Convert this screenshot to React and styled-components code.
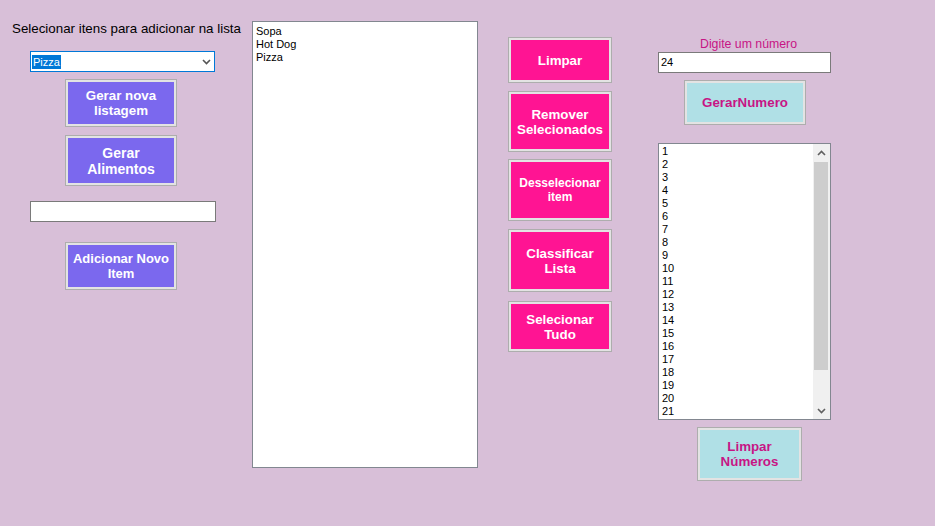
import React from "react";
import styled, { createGlobalStyle } from "styled-components";

const Global = createGlobalStyle`
  html, body { margin: 0; padding: 0; }
  body {
    background: #d8bfd8;
    font-family: "Liberation Sans", Arial, sans-serif;
    -webkit-font-smoothing: antialiased;
  }
`;

const Page = styled.div`
  display: flex;
  align-items: flex-start;
  width: 935px;
  height: 526px;
  background: #d8bfd8;
  overflow: hidden;
`;

const Column = styled.div`
  display: flex;
  flex-direction: column;
  align-items: flex-start;
  flex: 0 0 auto;
  width: ${(p) => p.$w}px;
  padding-top: ${(p) => p.$top || 0}px;
  box-sizing: border-box;
`;

const Label = styled.div`
  margin-left: ${(p) => p.$x || 0}px;
  font-size: ${(p) => p.$size || 13.33}px;
  line-height: ${(p) => p.$lh || 15}px;
  color: ${(p) => p.$color || "#000"};
  white-space: nowrap;
`;

const Button = styled.button`
  display: flex;
  align-items: center;
  justify-content: center;
  box-sizing: border-box;
  margin: ${(p) => p.$mt || 0}px 0 0 ${(p) => p.$x || 0}px;
  width: ${(p) => p.$w}px;
  height: ${(p) => p.$h}px;
  padding: 0 4px;
  border: 1px solid #adadad;
  box-shadow: inset 0 0 0 2px #e3e3e3;
  background: ${(p) => p.$bg};
  color: ${(p) => p.$fg || "#fff"};
  font-family: "Liberation Sans", Arial, sans-serif;
  font-weight: bold;
  font-size: ${(p) => p.$size || 13.33}px;
  line-height: ${(p) => p.$lh || 15}px;
  text-align: center;
  cursor: default;
`;

const TextBox = styled.div`
  box-sizing: border-box;
  margin: ${(p) => p.$mt || 0}px 0 0 ${(p) => p.$x || 0}px;
  width: ${(p) => p.$w}px;
  height: 21px;
  border: 1px solid #7a7a7a;
  background: #fff;
  padding: 3px 0 0 2px;
  font-size: 11px;
  line-height: 13px;
  color: #000;
`;

const Combo = styled.div`
  box-sizing: border-box;
  display: flex;
  align-items: center;
  justify-content: space-between;
  margin: ${(p) => p.$mt || 0}px 0 0 ${(p) => p.$x || 0}px;
  width: 185px;
  height: 21px;
  border: 1px solid #0078d7;
  background: #fff;
  padding: 0 3px 0 1px;
`;

const Selected = styled.span`
  display: inline-block;
  background: #0078d7;
  color: #fff;
  font-size: 11px;
  line-height: 14px;
  height: 14px;
  padding: 0 1px;
`;

const ListBox = styled.div`
  box-sizing: border-box;
  display: flex;
  margin: ${(p) => p.$mt || 0}px 0 0 ${(p) => p.$x || 0}px;
  width: ${(p) => p.$w}px;
  height: ${(p) => p.$h}px;
  border: 1px solid #828790;
  background: #fff;
  overflow: hidden;
`;

const Items = styled.div`
  flex: 1;
  padding: ${(p) => p.$pt || 1}px 0 0 3px;
  font-size: 11px;
  line-height: 13px;
  color: #000;
  overflow: hidden;
`;

const ScrollBar = styled.div`
  display: flex;
  flex-direction: column;
  width: 17px;
  background: #f0f0f0;
  flex: 0 0 auto;
`;

const ScrollArrow = styled.div`
  display: flex;
  align-items: center;
  justify-content: center;
  height: 17px;
  flex: 0 0 auto;
`;

const Track = styled.div`
  flex: 1;
  display: flex;
  flex-direction: column;
  padding: 1px 2px 0 1px;
`;

const Thumb = styled.div`
  height: 208px;
  background: #cdcdcd;
`;

const Chevron = ({ up, color = "#606060" }) => (
  <svg width="9" height="6" viewBox="0 0 9 6">
    <path
      d={up ? "M1 5 L4.5 1.5 L8 5" : "M1 1 L4.5 4.5 L8 1"}
      fill="none"
      stroke={color}
      strokeWidth="1.6"
    />
  </svg>
);

const foods = ["Sopa", "Hot Dog", "Pizza"];
const numbers = Array.from({ length: 21 }, (_, i) => i + 1);

const PURPLE = "#7b68ee";
const PINK = "#ff1493";
const CYAN = "#b0e0e6";
const VIOLET = "#c71585";

export default function App() {
  return (
    <>
      <Global />
      <Page>
        <Column $w={252} $top={21}>
          <Label $x={12}>Selecionar itens para adicionar na lista</Label>
          <Combo $x={30} $mt={15}>
            <Selected>Pizza</Selected>
            <Chevron color="#555" />
          </Combo>
          <Button $x={65} $mt={7} $w={112} $h={48} $bg={PURPLE}>
            Gerar nova<br />listagem
          </Button>
          <Button $x={65} $mt={8} $w={112} $h={51} $bg={PURPLE} $size={14} $lh={16}>
            Gerar<br />Alimentos
          </Button>
          <TextBox $x={30} $mt={15} $w={186} />
          <Button $x={65} $mt={20} $w={112} $h={48} $bg={PURPLE} $size={13}>
            Adicionar Novo<br />Item
          </Button>
        </Column>

        <Column $w={256} $top={21}>
          <ListBox $w={226} $h={447}>
            <Items $pt={3}>
              {foods.map((f) => (
                <div key={f}>{f}</div>
              ))}
            </Items>
          </ListBox>
        </Column>

        <Column $w={150} $top={37}>
          <Button $w={104} $h={46} $bg={PINK}>Limpar</Button>
          <Button $mt={8} $w={104} $h={61} $bg={PINK}>
            Remover<br />Selecionados
          </Button>
          <Button $mt={7} $w={104} $h={62} $bg={PINK} $size={12} $lh={14}>
            Desselecionar<br />item
          </Button>
          <Button $mt={8} $w={104} $h={63} $bg={PINK}>
            Classificar<br />Lista
          </Button>
          <Button $mt={9} $w={104} $h={51} $bg={PINK}>
            Selecionar<br />Tudo
          </Button>
        </Column>

        <Column $w={180} $top={37}>
          <Label $x={42} $size={12.3} $lh={14} $color={VIOLET}>
            Digite um número
          </Label>
          <TextBox $mt={1} $w={173}>24</TextBox>
          <Button $x={26} $mt={7} $w={122} $h={45} $bg={CYAN} $fg={VIOLET}>
            GerarNumero
          </Button>
          <ListBox $mt={18} $w={173} $h={277}>
            <Items $pt={1}>
              {numbers.map((n) => (
                <div key={n}>{n}</div>
              ))}
            </Items>
            <ScrollBar>
              <ScrollArrow>
                <Chevron up />
              </ScrollArrow>
              <Track>
                <Thumb />
              </Track>
              <ScrollArrow>
                <Chevron />
              </ScrollArrow>
            </ScrollBar>
          </ListBox>
          <Button $x={39} $mt={7} $w={105} $h={54} $bg={CYAN} $fg={VIOLET}>
            Limpar<br />Números
          </Button>
        </Column>
      </Page>
    </>
  );
}
